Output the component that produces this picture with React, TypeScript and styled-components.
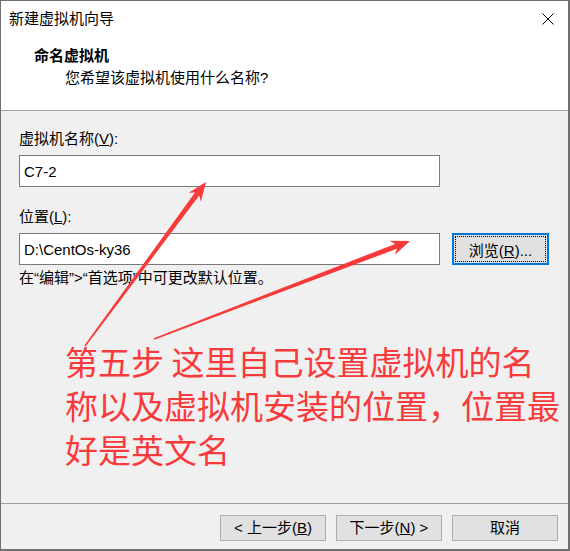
import styled, { createGlobalStyle } from "styled-components";

const GlobalStyle = createGlobalStyle`
  html, body {
    margin: 0;
    padding: 0;
    background: #ffffff;
  }
  body {
    font-family: "Liberation Sans", "Noto Sans CJK SC", sans-serif;
    color: #000000;
  }
`;

type Pt = [number, number];

// tapered arrow, thin at the tail and a filled head at the tip
function arrowPoints(tail: Pt, tip: Pt, head = 19, wing = 7.5, shaft = 2.6) {
  const dx = tip[0] - tail[0];
  const dy = tip[1] - tail[1];
  const len = Math.hypot(dx, dy);
  const ux = dx / len;
  const uy = dy / len;
  const nx = -uy;
  const ny = ux;
  const at = (d: number, w: number): string =>
    `${(tail[0] + ux * d + nx * w).toFixed(1)},${(tail[1] + uy * d + ny * w).toFixed(1)}`;
  return [
    at(0, 0.8),
    at(len - head + 4, shaft),
    at(len - head, wing),
    at(len, 0),
    at(len - head, -wing),
    at(len - head + 4, -shaft),
    at(0, -0.8),
  ].join(" ");
}

const arrows: { tail: Pt; tip: Pt }[] = [
  { tail: [85, 346], tip: [206, 182] },
  { tail: [154, 339], tip: [410, 241] },
];

export default function App() {
  return (
    <>
      <GlobalStyle />
      <Window>
        <Header>
          <TitleBar>
            <TitleText>新建虚拟机向导</TitleText>
            <CloseButton aria-label="关闭">
              <svg width="12" height="12" viewBox="0 0 12 12">
                <path d="M0.5 0.5 L11.5 11.5 M11.5 0.5 L0.5 11.5" stroke="#000" strokeWidth="1" />
              </svg>
            </CloseButton>
          </TitleBar>
          <Heading>命名虚拟机</Heading>
          <SubHeading>您希望该虚拟机使用什么名称?</SubHeading>
        </Header>

        <Body>
          <FieldLabel>
            虚拟机名称(<u>V</u>):
          </FieldLabel>
          <FieldRow>
            <TextBox readOnly defaultValue="C7-2" />
          </FieldRow>

          <FieldLabel $gap={20}>
            位置(<u>L</u>):
          </FieldLabel>
          <FieldRow>
            <TextBox readOnly defaultValue="D:\CentOs-ky36" />
            <BrowseButton>
              浏览(<u>R</u>)...
            </BrowseButton>
          </FieldRow>
          <Hint>在“编辑”&gt;“首选项”中可更改默认位置。</Hint>

          <Note>第五步 这里自己设置虚拟机的名称以及虚拟机安装的位置，位置最好是英文名</Note>
        </Body>

        <Footer>
          <DialogButton>
            &lt; 上一步(<u>B</u>)
          </DialogButton>
          <DialogButton>
            下一步(<u>N</u>) &gt;
          </DialogButton>
          <DialogButton>取消</DialogButton>
        </Footer>

        <ArrowLayer width="570" height="551" viewBox="0 0 570 551">
          {arrows.map((a, i) => (
            <polygon key={i} points={arrowPoints(a.tail, a.tip)} fill="#f73b3b" />
          ))}
        </ArrowLayer>
      </Window>
    </>
  );
}

const Window = styled.div`
  position: relative;
  width: 570px;
  height: 551px;
  box-sizing: border-box;
  display: flex;
  flex-direction: column;
  border-style: solid;
  border-color: #6f6f6f;
  border-width: 1px 2px 2px 1px;
  background: #f0f0f0;
  overflow: hidden;
`;

const Header = styled.div`
  background: #ffffff;
  border-bottom: 1px solid #a0a0a0;
  padding-bottom: 21px;
`;

const TitleBar = styled.div`
  height: 36px;
  display: flex;
  align-items: center;
  justify-content: space-between;
  padding: 0 13px 0 8px;
`;

const TitleText = styled.span`
  font-size: 15px;
  line-height: 20px;
`;

const CloseButton = styled.button`
  display: flex;
  align-items: center;
  justify-content: center;
  width: 14px;
  height: 14px;
  padding: 0;
  border: none;
  background: transparent;
`;

const Heading = styled.div`
  margin-top: 8px;
  padding-left: 33px;
  font-size: 15px;
  font-weight: 700;
  line-height: 22px;
`;

const SubHeading = styled.div`
  padding-left: 64px;
  font-size: 15px;
  line-height: 22px;
`;

const Body = styled.div`
  flex: 1;
  padding: 18px 0 0 18px;
  display: flex;
  flex-direction: column;
  align-items: flex-start;
`;

const FieldLabel = styled.div<{ $gap?: number }>`
  margin-top: ${(p) => p.$gap ?? 0}px;
  margin-bottom: 6px;
  font-size: 15px;
  line-height: 20px;
`;

const FieldRow = styled.div`
  display: flex;
  align-items: center;
  gap: 12px;
`;

const TextBox = styled.input`
  width: 421px;
  height: 32px;
  box-sizing: border-box;
  margin: 0;
  padding: 0 0 0 4px;
  border: 1px solid #7a7a7a;
  background: #ffffff;
  font-family: inherit;
  font-size: 15px;
  color: #000000;
  outline: none;
`;

const BrowseButton = styled.button`
  position: relative;
  width: 97px;
  height: 32px;
  box-sizing: border-box;
  padding: 0;
  border: 2px solid #0078d7;
  background: #e1e1e1;
  font-family: inherit;
  font-size: 15px;
  color: #000000;

  &::after {
    content: "";
    position: absolute;
    inset: 1px;
    border: 1px dotted #000000;
  }
`;

const Hint = styled.div`
  margin-top: 3px;
  font-size: 15px;
  line-height: 20px;
`;

const Note = styled.div`
  margin: 51px 0 0 46px;
  width: 500px;
  font-family: "Noto Sans CJK SC", sans-serif;
  font-size: 33px;
  line-height: 44px;
  color: #f83a3a;
`;

const Footer = styled.div`
  height: 46px;
  box-sizing: border-box;
  border-top: 1px solid #a0a0a0;
  padding: 11px 10px 0 0;
  display: flex;
  justify-content: flex-end;
  align-items: flex-start;
  gap: 10px;
`;

const DialogButton = styled.button`
  width: 106px;
  height: 26px;
  box-sizing: border-box;
  padding: 0;
  border: 1px solid #adadad;
  background: #e1e1e1;
  font-family: inherit;
  font-size: 15px;
  line-height: 20px;
  color: #000000;
`;

const ArrowLayer = styled.svg`
  position: absolute;
  left: -1px;
  top: -1px;
  pointer-events: none;
`;
